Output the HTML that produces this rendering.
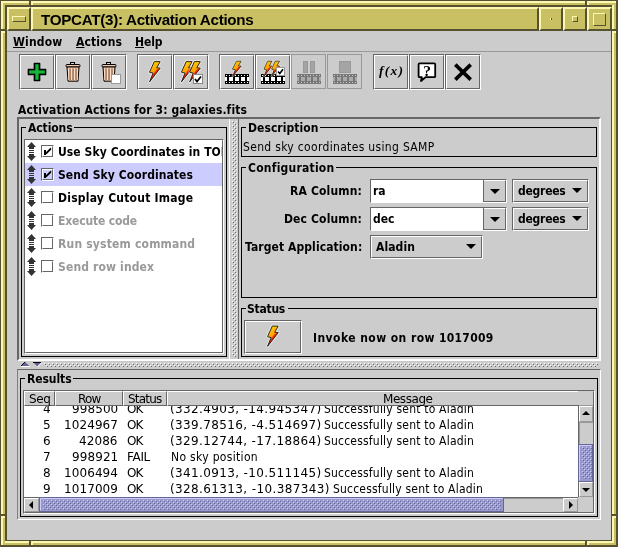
<!DOCTYPE html>
<html><head><meta charset="utf-8"><title>TOPCAT(3): Activation Actions</title>
<style>
html,body{margin:0;padding:0}
body{width:618px;height:547px;position:relative;overflow:hidden;background:#cccccc;font-family:'DejaVu Sans','Liberation Sans',sans-serif;font-size:12px;color:#000}
div,span,svg{position:absolute;box-sizing:border-box}
.t{white-space:pre;line-height:16px;height:16px;will-change:transform}
.b{font-family:'DejaVu Sans Condensed','DejaVu Sans',sans-serif;font-weight:bold;font-size:12px}
.p{font-family:'DejaVu Sans','Liberation Sans',sans-serif;font-weight:normal;font-size:12px}
.c{font-family:'DejaVu Sans Condensed','DejaVu Sans',sans-serif;font-weight:normal;font-size:12px}
.dis{color:#999999}
.fr{background:#c8c062}
.lt{background:#fcf8b4}
.dk{background:#56522f}
.bev{background:#c8c062;border:2px solid;border-color:#fcf8b4 #56522f #56522f #fcf8b4}
.bev1{background:#c8c062;border:1px solid;border-color:#fcf8b4 #56522f #56522f #fcf8b4}
.btn{border:1px solid;border-color:#666666 #fff #fff #666666}
.btn:before{content:"";position:absolute;left:0;top:0;right:0;bottom:0;border:1px solid;border-color:#fff #666666 #666666 #fff}
.btnd{border:1px solid #999999}
.tb{border:1px solid #000}
.sp{border:1px solid;border-color:#666666 #fff #fff #666666}
.sp:before{content:"";position:absolute;left:0;top:0;right:0;bottom:0;border:1px solid;border-color:transparent #666666 #666666 transparent}
.hd{border:1px solid;border-color:#fff #666666 #666666 #fff;overflow:hidden}
</style></head>
<body>
<svg width="0" height="0" style="left:0;top:0"><defs>
<pattern id="bumpG" width="4" height="4" patternUnits="userSpaceOnUse"><rect x="0" y="0" width="1" height="1" fill="#fff"/><rect x="1" y="1" width="1" height="1" fill="#666"/><rect x="2" y="2" width="1" height="1" fill="#fff"/><rect x="3" y="3" width="1" height="1" fill="#666"/></pattern>
<pattern id="bumpP" width="4" height="4" patternUnits="userSpaceOnUse"><rect x="0" y="0" width="1" height="1" fill="#ccccff"/><rect x="1" y="1" width="1" height="1" fill="#666699"/><rect x="2" y="2" width="1" height="1" fill="#ccccff"/><rect x="3" y="3" width="1" height="1" fill="#666699"/></pattern>
<linearGradient id="bolt" x1="0.2" y1="0" x2="0.6" y2="1"><stop offset="0" stop-color="#ffd800"/><stop offset="0.35" stop-color="#ffb000"/><stop offset="0.7" stop-color="#ff8a00"/><stop offset="1" stop-color="#f04000"/></linearGradient>
<linearGradient id="boltr" x1="0" y1="0" x2="1" y2="1"><stop offset="0.2" stop-color="#ff7000"/><stop offset="0.5" stop-color="#f01800"/><stop offset="1" stop-color="#a00000"/></linearGradient>
</defs></svg>
<div class="dk" style="left:0px;top:0px;width:618px;height:547px;"></div>
<div class="lt" style="left:1px;top:1px;width:615px;height:544px;"></div>
<div class="fr" style="left:3px;top:3px;width:613px;height:542px;"></div>
<div class="dk" style="left:5px;top:5px;width:608px;height:537px;"></div>
<div class="lt" style="left:612px;top:5px;width:2px;height:537px;"></div>
<div class="lt" style="left:5px;top:541px;width:609px;height:2px;"></div>
<div class="fr" style="left:614px;top:3px;width:2px;height:542px;"></div>
<div class="fr" style="left:3px;top:543px;width:613px;height:2px;"></div>
<div class="" style="left:7px;top:7px;width:604px;height:533px;background:#cccccc"></div>
<div class="dk" style="left:29px;top:1px;width:2px;height:4px;"></div>
<div class="dk" style="left:1px;top:29px;width:4px;height:2px;"></div>
<div class="dk" style="left:585px;top:1px;width:2px;height:4px;"></div>
<div class="dk" style="left:1px;top:514px;width:4px;height:2px;"></div>
<div class="dk" style="left:29px;top:541px;width:2px;height:4px;"></div>
<div class="dk" style="left:585px;top:541px;width:2px;height:4px;"></div>
<div class="dk" style="left:612px;top:29px;width:4px;height:2px;"></div>
<div class="dk" style="left:612px;top:514px;width:4px;height:2px;"></div>
<div class="lt" style="left:31px;top:1px;width:2px;height:4px;"></div>
<div class="lt" style="left:1px;top:31px;width:4px;height:2px;"></div>
<div class="lt" style="left:587px;top:1px;width:2px;height:4px;"></div>
<div class="lt" style="left:1px;top:516px;width:4px;height:2px;"></div>
<div class="lt" style="left:31px;top:541px;width:2px;height:4px;"></div>
<div class="lt" style="left:587px;top:541px;width:2px;height:4px;"></div>
<div class="lt" style="left:612px;top:31px;width:4px;height:2px;"></div>
<div class="lt" style="left:612px;top:516px;width:4px;height:2px;"></div>
<div class="bev" style="left:7px;top:7px;width:24px;height:24px;"></div>
<div class="bev1" style="left:12px;top:16px;width:14px;height:6px;"></div>
<div class="bev" style="left:31px;top:7px;width:508px;height:24px;"></div>
<div class="bev" style="left:539px;top:7px;width:24px;height:24px;"></div>
<div class="lt" style="left:550px;top:18px;width:1px;height:2px;"></div>
<div class="dk" style="left:551px;top:18px;width:1px;height:2px;"></div>
<div class="bev" style="left:563px;top:7px;width:24px;height:24px;"></div>
<div class="bev1" style="left:572px;top:16px;width:6px;height:6px;"></div>
<div class="bev" style="left:587px;top:7px;width:25px;height:24px;"></div>
<div class="bev1" style="left:593px;top:13px;width:13px;height:13px;"></div>
<span class="t " style="left:41.00px;top:11.73px;font-family:'Liberation Sans',sans-serif;font-weight:bold;font-size:15.2px;letter-spacing:-0.296px;">TOPCAT(3): Activation Actions</span>
<div class="" style="left:7px;top:51px;width:604px;height:1px;background:#999999"></div>
<span class="t b" style="left:13.00px;top:33.85px;letter-spacing:0.180px;"><u>W</u>indow</span>
<span class="t b" style="left:76.00px;top:33.85px;letter-spacing:0.121px;"><u>A</u>ctions</span>
<span class="t b" style="left:135.00px;top:33.85px;letter-spacing:-0.074px;"><u>H</u>elp</span>
<div class="btn" style="left:19px;top:54px;width:36px;height:36px;"></div>
<svg style="left:19px;top:54px;" width="36" height="36" viewBox="0 0 36 36"><path d="M15.4,9.4 H20.6 V15.4 H26.6 V20.6 H20.6 V26.6 H15.4 V20.6 H9.4 V15.4 H15.4 Z" fill="#079426" stroke="#000" stroke-width="1.5" stroke-linejoin="round"/><path d="M18,10.5 V25.5 M10.5,18 H25.5" stroke="#1cbc40" stroke-width="1.6"/></svg>
<div class="btn" style="left:55px;top:54px;width:36px;height:36px;"></div>
<svg style="left:55px;top:54px;" width="36" height="36" viewBox="0 0 36 36"><g transform="translate(1,0)"><rect x="14.5" y="8.5" width="4" height="2.5" fill="#f4ccb0" stroke="#000"/><rect x="10" y="10.5" width="14" height="2.5" rx="1" fill="#f4ccb0" stroke="#000"/><path d="M11,13 L23,13 L22,27.2 L12,27.2 Z" fill="#f4c8a8" stroke="#000"/><path d="M14,14.5 V26 M17,14.5 V26 M20,14.5 V26" stroke="#5a3420" stroke-width="0.9"/><path d="M12.7,14.5 V26 M15.6,14.5 V26 M18.6,14.5 V26 M21.4,14.5 V26" stroke="#fde4d0" stroke-width="0.8"/></g></svg>
<div class="btn" style="left:91px;top:54px;width:36px;height:36px;"></div>
<svg style="left:91px;top:54px;" width="36" height="36" viewBox="0 0 36 36"><g transform="translate(1,0)"><rect x="14.5" y="8.5" width="4" height="2.5" fill="#f4ccb0" stroke="#000"/><rect x="10" y="10.5" width="14" height="2.5" rx="1" fill="#f4ccb0" stroke="#000"/><path d="M11,13 L23,13 L22,27.2 L12,27.2 Z" fill="#f4c8a8" stroke="#000"/><path d="M14,14.5 V26 M17,14.5 V26 M20,14.5 V26" stroke="#5a3420" stroke-width="0.9"/><path d="M12.7,14.5 V26 M15.6,14.5 V26 M18.6,14.5 V26 M21.4,14.5 V26" stroke="#fde4d0" stroke-width="0.8"/></g><rect x="20.5" y="20.5" width="9" height="9" fill="#fff" stroke="#999" stroke-width="1"/></svg>
<div class="btn" style="left:137px;top:54px;width:36px;height:36px;"></div>
<svg style="left:137px;top:54px;" width="36" height="36" viewBox="0 0 36 36"><g transform="translate(0,0) scale(1,1)"><path d="M17.3,7.6 L23.2,7.6 L19.7,13.8 L23.2,14.1 L12.6,27.8 L16.1,19.1 L12.5,18.2 Z" fill="none" stroke="#fff" stroke-opacity="0.55" stroke-width="2.6" stroke-linejoin="round"/><path d="M17.3,7.6 L23.2,7.6 L19.7,13.8 L23.2,14.1 L12.6,27.8 L16.1,19.1 L12.5,18.2 Z" fill="url(#bolt)"/><path d="M23.2,14.1 L12.6,27.8 L15.3,21.3 L19.6,15.6 Z" fill="url(#boltr)"/><path d="M17.3,7.6 L23.2,7.6 L19.7,13.8 L23.2,14.1 L12.6,27.8 L16.1,19.1 L12.5,18.2 Z" fill="none" stroke="#1a1a1a" stroke-width="0.9" stroke-linejoin="miter"/></g></svg>
<div class="btn" style="left:173px;top:54px;width:36px;height:36px;"></div>
<svg style="left:173px;top:54px;" width="36" height="36" viewBox="0 0 36 36"><g transform="translate(-4.1,0) scale(1,1)"><path d="M17.3,7.6 L23.2,7.6 L19.7,13.8 L23.2,14.1 L12.6,27.8 L16.1,19.1 L12.5,18.2 Z" fill="none" stroke="#fff" stroke-opacity="0.55" stroke-width="2.6" stroke-linejoin="round"/><path d="M17.3,7.6 L23.2,7.6 L19.7,13.8 L23.2,14.1 L12.6,27.8 L16.1,19.1 L12.5,18.2 Z" fill="url(#bolt)"/><path d="M23.2,14.1 L12.6,27.8 L15.3,21.3 L19.6,15.6 Z" fill="url(#boltr)"/><path d="M17.3,7.6 L23.2,7.6 L19.7,13.8 L23.2,14.1 L12.6,27.8 L16.1,19.1 L12.5,18.2 Z" fill="none" stroke="#1a1a1a" stroke-width="0.9" stroke-linejoin="miter"/></g><g transform="translate(4.1,0) scale(1,1)"><path d="M17.3,7.6 L23.2,7.6 L19.7,13.8 L23.2,14.1 L12.6,27.8 L16.1,19.1 L12.5,18.2 Z" fill="none" stroke="#fff" stroke-opacity="0.55" stroke-width="2.6" stroke-linejoin="round"/><path d="M17.3,7.6 L23.2,7.6 L19.7,13.8 L23.2,14.1 L12.6,27.8 L16.1,19.1 L12.5,18.2 Z" fill="url(#bolt)"/><path d="M23.2,14.1 L12.6,27.8 L15.3,21.3 L19.6,15.6 Z" fill="url(#boltr)"/><path d="M17.3,7.6 L23.2,7.6 L19.7,13.8 L23.2,14.1 L12.6,27.8 L16.1,19.1 L12.5,18.2 Z" fill="none" stroke="#1a1a1a" stroke-width="0.9" stroke-linejoin="miter"/></g><g transform="translate(20,20)"><rect x="0.5" y="0.5" width="9" height="9" fill="#fff" stroke="#888"/><path d="M2,5 L4,7.5 L8,2.5" fill="none" stroke="#000" stroke-width="1.8"/></g></svg>
<div class="btn" style="left:219px;top:54px;width:36px;height:36px;"></div>
<svg style="left:219px;top:54px;" width="36" height="36" viewBox="0 0 36 36"><g transform="translate(1,0)"><rect x="5" y="20" width="24" height="10" fill="#000"/><rect x="6" y="21" width="1" height="1" fill="#fff"/><rect x="6" y="28" width="1" height="1" fill="#fff"/><rect x="9" y="21" width="1" height="1" fill="#fff"/><rect x="9" y="28" width="1" height="1" fill="#fff"/><rect x="12" y="21" width="1" height="1" fill="#fff"/><rect x="12" y="28" width="1" height="1" fill="#fff"/><rect x="15" y="21" width="1" height="1" fill="#fff"/><rect x="15" y="28" width="1" height="1" fill="#fff"/><rect x="18" y="21" width="1" height="1" fill="#fff"/><rect x="18" y="28" width="1" height="1" fill="#fff"/><rect x="21" y="21" width="1" height="1" fill="#fff"/><rect x="21" y="28" width="1" height="1" fill="#fff"/><rect x="24" y="21" width="1" height="1" fill="#fff"/><rect x="24" y="28" width="1" height="1" fill="#fff"/><rect x="27" y="21" width="1" height="1" fill="#fff"/><rect x="27" y="28" width="1" height="1" fill="#fff"/><rect x="9" y="23" width="4" height="4" fill="#fff"/><rect x="15" y="23" width="4" height="4" fill="#fff"/><rect x="21" y="23" width="4" height="4" fill="#fff"/><rect x="27" y="23" width="2" height="4" fill="#fff"/><rect x="5" y="23" width="2" height="4" fill="#fff"/></g><g transform="translate(3.2,1.5) scale(0.82,0.75)"><path d="M17.3,7.6 L23.2,7.6 L19.7,13.8 L23.2,14.1 L12.6,27.8 L16.1,19.1 L12.5,18.2 Z" fill="none" stroke="#fff" stroke-opacity="0.55" stroke-width="2.6" stroke-linejoin="round"/><path d="M17.3,7.6 L23.2,7.6 L19.7,13.8 L23.2,14.1 L12.6,27.8 L16.1,19.1 L12.5,18.2 Z" fill="url(#bolt)"/><path d="M23.2,14.1 L12.6,27.8 L15.3,21.3 L19.6,15.6 Z" fill="url(#boltr)"/><path d="M17.3,7.6 L23.2,7.6 L19.7,13.8 L23.2,14.1 L12.6,27.8 L16.1,19.1 L12.5,18.2 Z" fill="none" stroke="#1a1a1a" stroke-width="0.9" stroke-linejoin="miter"/></g></svg>
<div class="btn" style="left:255px;top:54px;width:36px;height:36px;"></div>
<svg style="left:255px;top:54px;" width="36" height="36" viewBox="0 0 36 36"><g transform="translate(1,0)"><rect x="5" y="20" width="24" height="10" fill="#000"/><rect x="6" y="21" width="1" height="1" fill="#fff"/><rect x="6" y="28" width="1" height="1" fill="#fff"/><rect x="9" y="21" width="1" height="1" fill="#fff"/><rect x="9" y="28" width="1" height="1" fill="#fff"/><rect x="12" y="21" width="1" height="1" fill="#fff"/><rect x="12" y="28" width="1" height="1" fill="#fff"/><rect x="15" y="21" width="1" height="1" fill="#fff"/><rect x="15" y="28" width="1" height="1" fill="#fff"/><rect x="18" y="21" width="1" height="1" fill="#fff"/><rect x="18" y="28" width="1" height="1" fill="#fff"/><rect x="21" y="21" width="1" height="1" fill="#fff"/><rect x="21" y="28" width="1" height="1" fill="#fff"/><rect x="24" y="21" width="1" height="1" fill="#fff"/><rect x="24" y="28" width="1" height="1" fill="#fff"/><rect x="27" y="21" width="1" height="1" fill="#fff"/><rect x="27" y="28" width="1" height="1" fill="#fff"/><rect x="9" y="23" width="4" height="4" fill="#fff"/><rect x="15" y="23" width="4" height="4" fill="#fff"/><rect x="21" y="23" width="4" height="4" fill="#fff"/><rect x="27" y="23" width="2" height="4" fill="#fff"/><rect x="5" y="23" width="2" height="4" fill="#fff"/></g><g transform="translate(-0.45,1.5) scale(0.75,0.75)"><path d="M17.3,7.6 L23.2,7.6 L19.7,13.8 L23.2,14.1 L12.6,27.8 L16.1,19.1 L12.5,18.2 Z" fill="none" stroke="#fff" stroke-opacity="0.55" stroke-width="2.6" stroke-linejoin="round"/><path d="M17.3,7.6 L23.2,7.6 L19.7,13.8 L23.2,14.1 L12.6,27.8 L16.1,19.1 L12.5,18.2 Z" fill="url(#bolt)"/><path d="M23.2,14.1 L12.6,27.8 L15.3,21.3 L19.6,15.6 Z" fill="url(#boltr)"/><path d="M17.3,7.6 L23.2,7.6 L19.7,13.8 L23.2,14.1 L12.6,27.8 L16.1,19.1 L12.5,18.2 Z" fill="none" stroke="#1a1a1a" stroke-width="0.9" stroke-linejoin="miter"/></g><g transform="translate(7.15,1.5) scale(0.75,0.75)"><path d="M17.3,7.6 L23.2,7.6 L19.7,13.8 L23.2,14.1 L12.6,27.8 L16.1,19.1 L12.5,18.2 Z" fill="none" stroke="#fff" stroke-opacity="0.55" stroke-width="2.6" stroke-linejoin="round"/><path d="M17.3,7.6 L23.2,7.6 L19.7,13.8 L23.2,14.1 L12.6,27.8 L16.1,19.1 L12.5,18.2 Z" fill="url(#bolt)"/><path d="M23.2,14.1 L12.6,27.8 L15.3,21.3 L19.6,15.6 Z" fill="url(#boltr)"/><path d="M17.3,7.6 L23.2,7.6 L19.7,13.8 L23.2,14.1 L12.6,27.8 L16.1,19.1 L12.5,18.2 Z" fill="none" stroke="#1a1a1a" stroke-width="0.9" stroke-linejoin="miter"/></g><g transform="translate(21,13)"><rect x="0.5" y="0.5" width="8" height="8" fill="#fff" stroke="#999"/><path d="M2,4.5 L3.8,6.5 L7,2.2" fill="none" stroke="#000" stroke-width="1.6"/></g></svg>
<div class="btnd" style="left:291px;top:54px;width:35px;height:35px;"></div>
<svg style="left:291px;top:54px;" width="36" height="36" viewBox="0 0 36 36"><g transform="translate(1,0)"><rect x="5" y="20" width="24" height="10" fill="#777"/><rect x="6" y="21" width="1" height="1" fill="#ccc"/><rect x="6" y="28" width="1" height="1" fill="#ccc"/><rect x="9" y="21" width="1" height="1" fill="#ccc"/><rect x="9" y="28" width="1" height="1" fill="#ccc"/><rect x="12" y="21" width="1" height="1" fill="#ccc"/><rect x="12" y="28" width="1" height="1" fill="#ccc"/><rect x="15" y="21" width="1" height="1" fill="#ccc"/><rect x="15" y="28" width="1" height="1" fill="#ccc"/><rect x="18" y="21" width="1" height="1" fill="#ccc"/><rect x="18" y="28" width="1" height="1" fill="#ccc"/><rect x="21" y="21" width="1" height="1" fill="#ccc"/><rect x="21" y="28" width="1" height="1" fill="#ccc"/><rect x="24" y="21" width="1" height="1" fill="#ccc"/><rect x="24" y="28" width="1" height="1" fill="#ccc"/><rect x="27" y="21" width="1" height="1" fill="#ccc"/><rect x="27" y="28" width="1" height="1" fill="#ccc"/><rect x="9" y="23" width="4" height="4" fill="#aaa"/><rect x="15" y="23" width="4" height="4" fill="#aaa"/><rect x="21" y="23" width="4" height="4" fill="#aaa"/><rect x="27" y="23" width="2" height="4" fill="#aaa"/><rect x="5" y="23" width="2" height="4" fill="#aaa"/></g><rect x="12.5" y="7.5" width="4" height="11" fill="#a4a4a4" stroke="#999"/><rect x="19.5" y="7.5" width="4" height="11" fill="#a4a4a4" stroke="#999"/></svg>
<div class="btnd" style="left:327px;top:54px;width:35px;height:35px;"></div>
<svg style="left:327px;top:54px;" width="36" height="36" viewBox="0 0 36 36"><g transform="translate(1,0)"><rect x="5" y="20" width="24" height="10" fill="#777"/><rect x="6" y="21" width="1" height="1" fill="#ccc"/><rect x="6" y="28" width="1" height="1" fill="#ccc"/><rect x="9" y="21" width="1" height="1" fill="#ccc"/><rect x="9" y="28" width="1" height="1" fill="#ccc"/><rect x="12" y="21" width="1" height="1" fill="#ccc"/><rect x="12" y="28" width="1" height="1" fill="#ccc"/><rect x="15" y="21" width="1" height="1" fill="#ccc"/><rect x="15" y="28" width="1" height="1" fill="#ccc"/><rect x="18" y="21" width="1" height="1" fill="#ccc"/><rect x="18" y="28" width="1" height="1" fill="#ccc"/><rect x="21" y="21" width="1" height="1" fill="#ccc"/><rect x="21" y="28" width="1" height="1" fill="#ccc"/><rect x="24" y="21" width="1" height="1" fill="#ccc"/><rect x="24" y="28" width="1" height="1" fill="#ccc"/><rect x="27" y="21" width="1" height="1" fill="#ccc"/><rect x="27" y="28" width="1" height="1" fill="#ccc"/><rect x="9" y="23" width="4" height="4" fill="#aaa"/><rect x="15" y="23" width="4" height="4" fill="#aaa"/><rect x="21" y="23" width="4" height="4" fill="#aaa"/><rect x="27" y="23" width="2" height="4" fill="#aaa"/><rect x="5" y="23" width="2" height="4" fill="#aaa"/></g><rect x="12.5" y="7.5" width="11" height="11" fill="#a4a4a4" stroke="#999"/></svg>
<div class="btn" style="left:373px;top:54px;width:36px;height:36px;"></div>
<svg style="left:373px;top:54px;will-change:transform;" width="36" height="36" viewBox="0 0 36 36"><text x="6" y="21" font-family="'Liberation Serif',serif" font-style="italic" font-weight="bold" font-size="13.5" textLength="24" lengthAdjust="spacing">f(x)</text></svg>
<div class="btn" style="left:409px;top:54px;width:36px;height:36px;"></div>
<svg style="left:409px;top:54px;will-change:transform;" width="36" height="36" viewBox="0 0 36 36"><path d="M10.6,9.3 H25.2 Q26.2,9.3 26.2,10.3 V22.2 Q26.2,23.2 25.2,23.2 H16.5 L12,27 L12.8,23.2 H10.6 Q9.6,23.2 9.6,22.2 V10.3 Q9.6,9.3 10.6,9.3 Z" fill="#fff" stroke="#000" stroke-width="1.8" stroke-linejoin="round"/><text x="18" y="21.5" text-anchor="middle" font-family="'Liberation Serif',serif" font-weight="bold" font-size="15.5">?</text></svg>
<div class="btn" style="left:445px;top:54px;width:36px;height:36px;"></div>
<svg style="left:445px;top:54px;" width="36" height="36" viewBox="0 0 36 36"><path d="M10.3,10.6 L25.7,25.6 M25.7,10.6 L10.3,25.6" stroke="#000" stroke-width="3.6"/></svg>
<span class="t b" style="left:17.50px;top:101.85px;letter-spacing:0.079px;">Activation Actions for 3: galaxies.fits</span>
<div class="" style="left:17px;top:117px;width:584px;height:244px;border:2px solid;border-color:#666666 #fff #fff #666666"></div>
<div class="" style="left:229px;top:119px;width:1px;height:240px;background:#fff"></div>
<div class="" style="left:238px;top:119px;width:1px;height:240px;background:#666666"></div>
<div class="" style="left:17px;top:369px;width:584px;height:151px;border:1px solid;border-color:#666666 #fff #fff #808080"></div>
<svg style="left:232px;top:121px;" width="5" height="236" viewBox="0 0 5 236"><rect width="5" height="236" fill="url(#bumpG)"/></svg>
<svg style="left:44px;top:363px;" width="554" height="4" viewBox="0 0 554 4"><rect width="554" height="4" fill="url(#bumpG)"/></svg>
<svg style="left:20px;top:361px;" width="24" height="8" viewBox="0 0 24 8"><path d="M5,1 L9.5,5 H0.8 Z" fill="#61619c"/><path d="M1,5 L5,1" stroke="#000" stroke-width="1"/><path d="M1,5.5 H10" stroke="#fff"/><path d="M13,1 H21.5 L17.2,5.5 Z" fill="#61619c"/><path d="M13,1.5 H21" stroke="#000"/><path d="M22,1.3 L17.6,6" stroke="#fff" stroke-width="1"/></svg>
<div class="tb" style="left:21px;top:127px;width:206px;height:230px;"></div>
<div class="" style="left:26px;top:120px;width:48px;height:14px;background:#ccc"></div>
<span class="t b" style="left:28.00px;top:119.85px;letter-spacing:-0.094px;">Actions</span>
<div class="sp" style="left:24px;top:139px;width:200px;height:215px;"></div>
<div style="left:25px;top:140px;width:197px;height:212px;overflow:hidden;background:#fff">
<svg style="left:2px;top:2px;" width="9" height="19" viewBox="0 0 9 19"><path d="M4.5,0 L9,5 H7 V7 H2 V5 H0 Z M2,8 H7 V9 H2 Z M2,10 H7 V11 H2 Z M0,14 H2 V12 H7 V14 H9 L4.5,19 Z" fill="#333"/></svg>
<div class="" style="left:16px;top:5px;width:13px;height:13px;border:1px solid;border-color:#666666 #fff #fff #666666"><div style="left:0;top:0;width:11px;height:11px;border:1px solid;border-color:#fff #666666 #666666 #fff"></div></div>
<svg style="left:16px;top:5px;" width="13" height="13" viewBox="0 0 13 13"><rect x="3" y="5" width="2" height="5" fill="#000"/><path d="M9.5,3.5 L5.5,7.5 M9.5,4.5 L5.5,8.5" stroke="#000" stroke-width="1.2" stroke-linecap="square"/></svg>
<span class="t b" style="left:33.00px;top:3.85px;letter-spacing:0.079px;">Use Sky Coordinates in TOPCAT</span>
<div class="" style="left:0px;top:23px;width:197px;height:23px;background:#ccccff"></div>
<svg style="left:2px;top:25px;" width="9" height="19" viewBox="0 0 9 19"><path d="M4.5,0 L9,5 H7 V7 H2 V5 H0 Z M2,8 H7 V9 H2 Z M2,10 H7 V11 H2 Z M0,14 H2 V12 H7 V14 H9 L4.5,19 Z" fill="#333"/></svg>
<div class="" style="left:16px;top:28px;width:13px;height:13px;border:1px solid;border-color:#666666 #fff #fff #666666"><div style="left:0;top:0;width:11px;height:11px;border:1px solid;border-color:#fff #666666 #666666 #fff"></div></div>
<svg style="left:16px;top:28px;" width="13" height="13" viewBox="0 0 13 13"><rect x="3" y="5" width="2" height="5" fill="#000"/><path d="M9.5,3.5 L5.5,7.5 M9.5,4.5 L5.5,8.5" stroke="#000" stroke-width="1.2" stroke-linecap="square"/></svg>
<span class="t b" style="left:33.00px;top:26.85px;letter-spacing:0.079px;">Send Sky Coordinates</span>
<svg style="left:2px;top:48px;" width="9" height="19" viewBox="0 0 9 19"><path d="M4.5,0 L9,5 H7 V7 H2 V5 H0 Z M2,8 H7 V9 H2 Z M2,10 H7 V11 H2 Z M0,14 H2 V12 H7 V14 H9 L4.5,19 Z" fill="#333"/></svg>
<div class="" style="left:16px;top:51px;width:13px;height:13px;border:1px solid;border-color:#666666 #fff #fff #666666"><div style="left:0;top:0;width:11px;height:11px;border:1px solid;border-color:#fff #666666 #666666 #fff"></div></div>
<span class="t b" style="left:33.00px;top:49.85px;letter-spacing:0.239px;">Display Cutout Image</span>
<svg style="left:2px;top:71px;" width="9" height="19" viewBox="0 0 9 19"><path d="M4.5,0 L9,5 H7 V7 H2 V5 H0 Z M2,8 H7 V9 H2 Z M2,10 H7 V11 H2 Z M0,14 H2 V12 H7 V14 H9 L4.5,19 Z" fill="#333"/></svg>
<div class="" style="left:16px;top:74px;width:13px;height:13px;border:1px solid;border-color:#666666 #fff #fff #666666"><div style="left:0;top:0;width:11px;height:11px;border:1px solid;border-color:#fff #666666 #666666 #fff"></div></div>
<span class="t b dis" style="left:33.00px;top:72.85px;letter-spacing:-0.155px;">Execute code</span>
<svg style="left:2px;top:94px;" width="9" height="19" viewBox="0 0 9 19"><path d="M4.5,0 L9,5 H7 V7 H2 V5 H0 Z M2,8 H7 V9 H2 Z M2,10 H7 V11 H2 Z M0,14 H2 V12 H7 V14 H9 L4.5,19 Z" fill="#333"/></svg>
<div class="" style="left:16px;top:97px;width:13px;height:13px;border:1px solid;border-color:#666666 #fff #fff #666666"><div style="left:0;top:0;width:11px;height:11px;border:1px solid;border-color:#fff #666666 #666666 #fff"></div></div>
<span class="t b dis" style="left:33.00px;top:95.85px;letter-spacing:0.191px;">Run system command</span>
<svg style="left:2px;top:117px;" width="9" height="19" viewBox="0 0 9 19"><path d="M4.5,0 L9,5 H7 V7 H2 V5 H0 Z M2,8 H7 V9 H2 Z M2,10 H7 V11 H2 Z M0,14 H2 V12 H7 V14 H9 L4.5,19 Z" fill="#333"/></svg>
<div class="" style="left:16px;top:120px;width:13px;height:13px;border:1px solid;border-color:#666666 #fff #fff #666666"><div style="left:0;top:0;width:11px;height:11px;border:1px solid;border-color:#fff #666666 #666666 #fff"></div></div>
<span class="t b dis" style="left:33.00px;top:118.85px;letter-spacing:0.146px;">Send row index</span>
</div>
<div class="tb" style="left:241px;top:127px;width:356px;height:30px;"></div>
<div class="" style="left:246px;top:120px;width:74px;height:14px;background:#ccc"></div>
<span class="t b" style="left:247.50px;top:119.85px;letter-spacing:0.060px;">Description</span>
<span class="t c" style="left:243.00px;top:138.85px;letter-spacing:0.326px;">Send sky coordinates using SAMP</span>
<div class="tb" style="left:241px;top:167px;width:356px;height:131px;"></div>
<div class="" style="left:246px;top:160px;width:90px;height:14px;background:#ccc"></div>
<span class="t b" style="left:247.50px;top:159.85px;letter-spacing:0.228px;">Configuration</span>
<div class="tb" style="left:241px;top:308px;width:356px;height:49px;"></div>
<div class="" style="left:246px;top:301px;width:42px;height:14px;background:#ccc"></div>
<span class="t b" style="left:247.00px;top:300.85px;letter-spacing:-0.250px;">Status</span>
<div class="btn" style="left:244px;top:320px;width:58px;height:34px;"></div>
<svg style="left:255px;top:320px;" width="36" height="36" viewBox="0 0 36 36"><g transform="translate(0,-1.5) scale(1,1)"><path d="M17.3,7.6 L23.2,7.6 L19.7,13.8 L23.2,14.1 L12.6,27.8 L16.1,19.1 L12.5,18.2 Z" fill="none" stroke="#fff" stroke-opacity="0.55" stroke-width="2.6" stroke-linejoin="round"/><path d="M17.3,7.6 L23.2,7.6 L19.7,13.8 L23.2,14.1 L12.6,27.8 L16.1,19.1 L12.5,18.2 Z" fill="url(#bolt)"/><path d="M23.2,14.1 L12.6,27.8 L15.3,21.3 L19.6,15.6 Z" fill="url(#boltr)"/><path d="M17.3,7.6 L23.2,7.6 L19.7,13.8 L23.2,14.1 L12.6,27.8 L16.1,19.1 L12.5,18.2 Z" fill="none" stroke="#1a1a1a" stroke-width="0.9" stroke-linejoin="miter"/></g></svg>
<span class="t b" style="left:312.50px;top:329.85px;letter-spacing:0.440px;">Invoke now on row</span>
<span class="t b" style="left:438.50px;top:329.85px;letter-spacing:0.272px;">1017009</span>
<span class="t b" style="left:290.16px;top:182.85px;letter-spacing:0.159px;">RA Column:</span>
<span class="t b" style="left:284.14px;top:210.85px;letter-spacing:0.142px;">Dec Column:</span>
<span class="t b" style="left:244.79px;top:238.85px;letter-spacing:0.091px;">Target Application:</span>
<div class="btn" style="left:370px;top:179px;width:137px;height:24px;"></div>
<div class="" style="left:371px;top:180px;width:112px;height:22px;background:#fff"></div>
<div class="" style="left:483px;top:180px;width:1px;height:22px;background:#666666"></div>
<svg style="left:490px;top:189px;" width="10" height="5" viewBox="0 0 10 5"><path d="M0,0 H10 L5,5 Z" fill="#000"/></svg>
<div class="btn" style="left:512px;top:179px;width:77px;height:24px;"></div>
<svg style="left:572px;top:188px;" width="10" height="5" viewBox="0 0 10 5"><path d="M0,0 H10 L5,5 Z" fill="#000"/></svg>
<div class="btn" style="left:370px;top:207px;width:137px;height:24px;"></div>
<div class="" style="left:371px;top:208px;width:112px;height:22px;background:#fff"></div>
<div class="" style="left:483px;top:208px;width:1px;height:22px;background:#666666"></div>
<svg style="left:490px;top:217px;" width="10" height="5" viewBox="0 0 10 5"><path d="M0,0 H10 L5,5 Z" fill="#000"/></svg>
<div class="btn" style="left:512px;top:207px;width:77px;height:24px;"></div>
<svg style="left:572px;top:216px;" width="10" height="5" viewBox="0 0 10 5"><path d="M0,0 H10 L5,5 Z" fill="#000"/></svg>
<div class="btn" style="left:370px;top:235px;width:113px;height:24px;"></div>
<svg style="left:466px;top:244px;" width="10" height="5" viewBox="0 0 10 5"><path d="M0,0 H10 L5,5 Z" fill="#000"/></svg>
<span class="t b" style="left:372.50px;top:182.85px;">ra</span>
<span class="t b" style="left:372.50px;top:210.85px;">dec</span>
<span class="t b" style="left:518.00px;top:182.85px;letter-spacing:-0.241px;">degrees</span>
<span class="t b" style="left:518.00px;top:210.85px;letter-spacing:-0.241px;">degrees</span>
<span class="t b" style="left:375.50px;top:238.85px;letter-spacing:0.091px;">Aladin</span>
<div class="tb" style="left:20px;top:378px;width:578px;height:139px;"></div>
<div class="" style="left:25px;top:371px;width:48px;height:14px;background:#ccc"></div>
<span class="t b" style="left:26.50px;top:370.85px;letter-spacing:-0.078px;">Results</span>
<div class="sp" style="left:23px;top:390px;width:572px;height:124px;"></div>
<div style="left:24px;top:391px;width:554px;height:15px;overflow:hidden">
<div class="hd" style="left:0px;top:0px;width:31px;height:15px;"></div>
<div class="hd" style="left:31px;top:0px;width:68px;height:15px;"></div>
<div class="hd" style="left:99px;top:0px;width:44px;height:15px;"></div>
<div class="hd" style="left:143px;top:0px;width:482px;height:15px;"></div>
</div>
<span class="t p" style="left:28.50px;top:390.85px;letter-spacing:-0.375px;">Seq</span>
<span class="t p" style="left:77.50px;top:390.85px;letter-spacing:-0.823px;">Row</span>
<span class="t p" style="left:127.50px;top:390.85px;letter-spacing:-0.792px;">Status</span>
<span class="t p" style="left:382.50px;top:390.85px;letter-spacing:-0.442px;">Message</span>
<div style="left:24px;top:406px;width:554px;height:91px;background:#fff;overflow:hidden">
<span class="t p" style="left:19.06px;top:-5.15px;">4</span>
<span class="t p" style="left:47.76px;top:-5.15px;letter-spacing:0.085px;">998500</span>
<span class="t p" style="left:102.50px;top:-5.15px;letter-spacing:-0.914px;">OK</span>
<span class="t p" style="left:146.00px;top:-5.15px;letter-spacing:0.364px;">(332.4903, -14.945347)</span>
<span class="t c" style="left:300.30px;top:-5.15px;letter-spacing:0.198px;">Successfully sent to Aladin</span>
<span class="t p" style="left:19.06px;top:10.85px;">5</span>
<span class="t p" style="left:40.04px;top:10.85px;letter-spacing:0.084px;">1024967</span>
<span class="t p" style="left:102.50px;top:10.85px;letter-spacing:-0.914px;">OK</span>
<span class="t p" style="left:146.00px;top:10.85px;letter-spacing:0.364px;">(339.78516, -4.514697)</span>
<span class="t c" style="left:300.30px;top:10.85px;letter-spacing:0.198px;">Successfully sent to Aladin</span>
<span class="t p" style="left:19.06px;top:26.85px;">6</span>
<span class="t p" style="left:55.48px;top:26.85px;letter-spacing:0.083px;">42086</span>
<span class="t p" style="left:102.50px;top:26.85px;letter-spacing:-0.914px;">OK</span>
<span class="t p" style="left:146.00px;top:26.85px;letter-spacing:0.364px;">(329.12744, -17.18864)</span>
<span class="t c" style="left:300.30px;top:26.85px;letter-spacing:0.198px;">Successfully sent to Aladin</span>
<span class="t p" style="left:19.06px;top:42.85px;">7</span>
<span class="t p" style="left:47.76px;top:42.85px;letter-spacing:0.085px;">998921</span>
<span class="t p" style="left:102.50px;top:42.85px;letter-spacing:-0.309px;">FAIL</span>
<span class="t c" style="left:146.50px;top:42.85px;letter-spacing:0.324px;">No sky position</span>
<span class="t p" style="left:19.06px;top:58.85px;">8</span>
<span class="t p" style="left:40.04px;top:58.85px;letter-spacing:0.084px;">1006494</span>
<span class="t p" style="left:102.50px;top:58.85px;letter-spacing:-0.914px;">OK</span>
<span class="t p" style="left:146.00px;top:58.85px;letter-spacing:0.364px;">(341.0913, -10.511145)</span>
<span class="t c" style="left:300.30px;top:58.85px;letter-spacing:0.198px;">Successfully sent to Aladin</span>
<span class="t p" style="left:19.06px;top:74.85px;">9</span>
<span class="t p" style="left:40.04px;top:74.85px;letter-spacing:0.084px;">1017009</span>
<span class="t p" style="left:102.50px;top:74.85px;letter-spacing:-0.914px;">OK</span>
<span class="t p" style="left:146.00px;top:74.85px;letter-spacing:0.378px;">(328.61313, -10.387343)</span>
<span class="t c" style="left:308.60px;top:74.85px;letter-spacing:0.198px;">Successfully sent to Aladin</span>
</div>
<div class="" style="left:578px;top:405px;width:15px;height:92px;background:#ccc"></div>
<div class="" style="left:578px;top:405px;width:1px;height:92px;background:#666666"></div>
<div class="" style="left:579px;top:405px;width:14px;height:1px;background:#999999"></div>
<div class="" style="left:579px;top:406px;width:14px;height:16px;background:#ccc;border:1px solid;border-color:#fff #999999 #999999 #fff"></div>
<svg style="left:579px;top:406px;" width="14" height="16" viewBox="0 0 14 16"><path d="M7,5 L11,9 H3 Z" fill="#000"/></svg>
<div class="" style="left:579px;top:482px;width:14px;height:15px;background:#ccc;border:1px solid;border-color:#fff #999999 #999999 #fff"></div>
<svg style="left:579px;top:482px;" width="14" height="15" viewBox="0 0 14 15"><path d="M3,6 H11 L7,10 Z" fill="#000"/></svg>
<div class="" style="left:579px;top:422px;width:14px;height:60px;background:#ccc;border-left:1px solid #999999;border-top:1px solid #999999"></div>
<div class="" style="left:578px;top:444px;width:15px;height:38px;background:#9999cc;border:1px solid #666699"></div>
<div class="" style="left:579px;top:445px;width:13px;height:36px;border:1px solid;border-color:#ccccff transparent transparent #ccccff"></div>
<svg style="left:582px;top:447px;" width="10" height="32" viewBox="0 0 10 32"><rect width="10" height="32" fill="url(#bumpP)"/></svg>
<div class="" style="left:24px;top:497px;width:554px;height:15px;background:#ccc"></div>
<div class="" style="left:24px;top:497px;width:554px;height:1px;background:#666666"></div>
<div class="" style="left:24px;top:498px;width:15px;height:14px;background:#ccc;border:1px solid;border-color:#fff #999999 #999999 #fff"></div>
<svg style="left:24px;top:498px;" width="15" height="14" viewBox="0 0 15 14"><path d="M5,7 L9,3 V11 Z" fill="#000"/></svg>
<div class="" style="left:563px;top:498px;width:15px;height:14px;background:#ccc;border:1px solid;border-color:#fff #999999 #999999 #fff"></div>
<svg style="left:563px;top:498px;" width="15" height="14" viewBox="0 0 15 14"><path d="M6,3 L10,7 L6,11 Z" fill="#000"/></svg>
<div class="" style="left:39px;top:498px;width:524px;height:14px;background:#ccc;border-left:1px solid #999999;border-top:1px solid #999999"></div>
<div class="" style="left:39px;top:497px;width:465px;height:15px;background:#9999cc;border:1px solid #666699"></div>
<div class="" style="left:40px;top:498px;width:463px;height:13px;border:1px solid;border-color:#ccccff transparent transparent #ccccff"></div>
<svg style="left:43px;top:500px;" width="458" height="10" viewBox="0 0 458 10"><rect width="458" height="10" fill="url(#bumpP)"/></svg>
<div class="" style="left:578px;top:497px;width:15px;height:15px;background:#ccc"></div>
</body></html>
